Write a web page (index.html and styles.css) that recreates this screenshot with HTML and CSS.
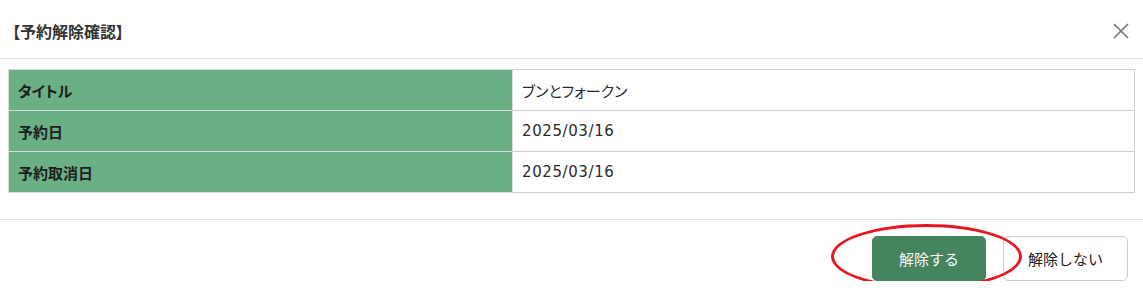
FILE: index.html
```html
<!DOCTYPE html>
<html lang="ja">
<head>
<meta charset="utf-8">
<title>予約解除確認</title>
<link rel="stylesheet" href="styles.css">
</head>
<body>
<div class="modal">
  <div class="modal-header">
    <h1 class="modal-title">【予約解除確認】</h1>
    <button class="close-btn" aria-label="閉じる">
      <svg width="16" height="16" viewBox="0 0 16 16"><path d="M1 1 L15 15 M15 1 L1 15" stroke="#777" stroke-width="1.7" fill="none"/></svg>
    </button>
  </div>
  <div class="modal-body">
    <table class="info-table">
      <colgroup><col class="col-label"><col></colgroup>
      <tr><th>タイトル</th><td>ブンとフォークン</td></tr>
      <tr><th>予約日</th><td class="num">2025/03/16</td></tr>
      <tr><th>予約取消日</th><td class="num">2025/03/16</td></tr>
    </table>
  </div>
  <div class="modal-footer">
    <div class="primary-wrap">
      <button class="btn btn-primary">解除する</button>
      <span class="annotation"></span>
    </div>
    <button class="btn btn-secondary">解除しない</button>
  </div>
</div>
</body>
</html>
```

FILE: styles.css
```css
* { box-sizing: border-box; }
body {
  margin: 0;
  background: #fff;
  font-family: "Noto Sans CJK JP", "Noto Sans", sans-serif;
  font-feature-settings: "palt";
  color: #333;
}
.modal { width: 1143px; }
.modal-header {
  height: 59px;
  border-bottom: 1px solid #e3e3e3;
  display: flex;
  align-items: center;
  justify-content: space-between;
  padding: 3px 14px 0 12px;
}
.modal-title {
  margin: 0;
  font-size: 16px;
  font-weight: bold;
  color: #333;
}
.close-btn {
  border: 0;
  background: none;
  padding: 0;
  width: 16px;
  height: 16px;
  display: flex;
}
.modal-body { padding: 10px 8px 26px; }
.info-table {
  width: 100%;
  border-collapse: collapse;
  table-layout: fixed;
  font-size: 15px;
}
.col-label { width: 504px; }
.info-table th,
.info-table td {
  height: 41px;
  border: 1px solid #cfcfcf;
  padding: 0 9px;
  text-align: left;
  vertical-align: middle;
}
.info-table th {
  background: #6baf84;
  color: #1e1e1e;
  font-weight: bold;
  border-color: #d6dcd8;
}
.info-table td { color: #2b2b2b; }
.info-table td.num {
  font-family: "DejaVu Sans", "Noto Sans CJK JP", sans-serif;
  letter-spacing: 0.6px;
}
.modal-footer {
  border-top: 1px solid #e3e3e3;
  display: flex;
  justify-content: flex-end;
  align-items: center;
  gap: 17px;
  padding: 16px 15px 0 0;
}
.primary-wrap { position: relative; display: flex; }
.btn {
  height: 45px;
  padding: 0;
  white-space: nowrap;
  text-align: center;
  font-family: inherit;
  font-size: 15px;
  border-radius: 5px;
}
.btn-primary {
  background: #44845f;
  color: #f4f7f5;
  border: 1px solid #44845f;
  width: 114px;
}
.btn-secondary {
  background: #fff;
  color: #222;
  border: 1px solid #cccccc;
  width: 125px;
}
.annotation {
  position: absolute;
  z-index: 1;
  left: -41px;
  top: -12px;
  width: 191px;
  height: 65px;
  border: 3.5px solid #e8161e;
  border-radius: 50%;
  pointer-events: none;
}
```
